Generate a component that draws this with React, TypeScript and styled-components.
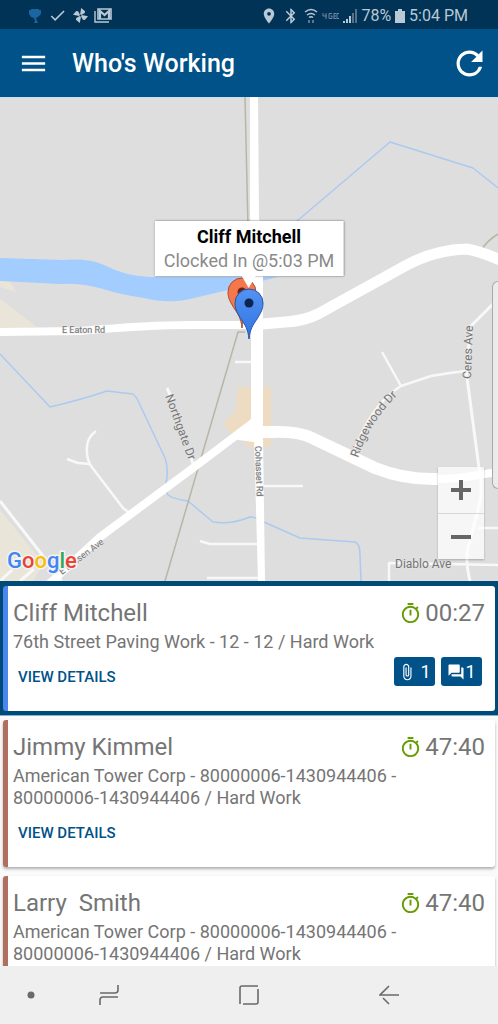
import React from "react";
import styled, { createGlobalStyle } from "styled-components";
import {
  MdAttachFile,
  MdBluetooth,
  MdCheck,
  MdMenu,
  MdOutlineTimer,
  MdPlace,
  MdQuestionAnswer,
  MdRefresh,
} from "react-icons/md";

const GlobalStyle = createGlobalStyle`
  * { box-sizing: border-box; }
  body { margin: 0; font-family: Roboto, "Liberation Sans", sans-serif; background: #efefef; }
  button { font: inherit; border: 0; padding: 0; background: none; color: inherit; cursor: pointer; }
  svg { display: block; }
`;

const Screen = styled.div`
  display: flex;
  flex-direction: column;
  height: 100vh;
  overflow: hidden;
`;

const StatusBar = styled.div`
  flex: none;
  display: flex;
  justify-content: space-between;
  align-items: center;
  height: 29px;
  padding: 2px 30px 0 28px;
  background: #003355;
  color: #b9c9d6;
  font-size: 16px;
  line-height: 20px;
`;

const StatusGroup = styled.div<{ $gap: number }>`
  display: flex;
  align-items: center;
  gap: ${(p) => p.$gap}px;
`;

const AppBar = styled.header`
  flex: none;
  display: flex;
  align-items: center;
  height: 68px;
  padding: 0 9px 0 18px;
  background: #005288;
  color: #fff;
`;

const AppTitle = styled.h1`
  flex: 1;
  margin: 0 0 0 23px;
  padding-top: 2px;
  font-size: 25px;
  line-height: 32px;
  font-weight: 500;
`;

const MapPanel = styled.main`
  position: relative;
  flex: 44 1 0;
  min-height: 0;
  background: #dedede;
  box-shadow: inset 0 1px #c4e2f2;
  overflow: hidden;
`;

const MapDrawing = styled.svg`
  width: 100%;
  height: 100%;
`;

const InfoWindow = styled.div`
  position: absolute;
  left: 50%;
  bottom: 63%;
  transform: translateX(-50%);
  padding: 4px 9px 3px;
  background: #fff;
  box-shadow: 0 0 2px rgba(0, 0, 0, 0.55);
  font-size: 18px;
  line-height: 24px;
  text-align: center;
  white-space: nowrap;
  color: #8a8a8a;
  &::after {
    content: "";
    position: absolute;
    top: 100%;
    left: 50%;
    margin-left: -7px;
    border: 7px solid transparent;
    border-top: 12px solid #fff;
    border-bottom: 0;
  }
`;

const InfoName = styled.strong`
  display: block;
  color: #000;
  font-weight: 700;
`;

const ZoomControl = styled.div`
  position: absolute;
  right: 14px;
  bottom: 22px;
  width: 46px;
  background: rgba(255, 255, 255, 0.72);
  box-shadow: 0 1px 2px rgba(0, 0, 0, 0.25);
`;

const ZoomButton = styled.button`
  display: flex;
  align-items: center;
  justify-content: center;
  width: 100%;
  height: 46px;
  & + & { border-top: 1px solid #d8d8d8; }
`;

const DrawerHandle = styled.div`
  position: absolute;
  right: 0;
  top: 38%;
  bottom: 19%;
  width: 6px;
  border: 1px solid #aaa;
  border-right: 0;
  border-radius: 6px 0 0 6px;
  background: #ebebeb;
`;

const WorkerList = styled.ul`
  flex: 35 1 0;
  min-height: 0;
  margin: 0;
  padding: 0;
  list-style: none;
  overflow-y: auto;
  scrollbar-width: none;
  background: #fafafa;
`;

const WorkerItem = styled.li<{ $selected: boolean }>`
  padding: 5px 3px 4px;
  background: ${(p) => (p.$selected ? "#004a78" : "transparent")};
  box-shadow: ${(p) => (p.$selected ? "0 1px #85b1d4" : "none")};
`;

const Card = styled.article<{ $accent: string; $raised: boolean }>`
  padding: 11px 10px 14px 5px;
  border-left: 5px solid ${(p) => p.$accent};
  border-radius: 3px;
  background: #fff;
  color: #757575;
  box-shadow: ${(p) => (p.$raised ? "0 2px 3px rgba(0, 0, 0, 0.3)" : "none")};
`;

const CardHeading = styled.div`
  display: flex;
  justify-content: space-between;
  align-items: center;
  font-size: 24px;
  line-height: 32px;
`;

const WorkerName = styled.h2`
  margin: 0;
  font: inherit;
  white-space: pre;
`;

const Elapsed = styled.span`
  display: flex;
  align-items: center;
  gap: 3px;
  svg { color: #669c00; }
`;

const Job = styled.p`
  margin: 2px 60px 0 0;
  font-size: 18px;
  line-height: 22px;
`;

const CardActions = styled.div`
  display: flex;
  justify-content: space-between;
  align-items: flex-start;
  margin-top: 4px;
  padding: 0 3px 0 5px;
`;

const DetailsButton = styled.button`
  font-size: 15px;
  font-weight: 500;
  line-height: 40px;
  color: #005288;
`;

const Badges = styled.div`
  display: flex;
  gap: 6px;
`;

const Badge = styled.button<{ $gap: number }>`
  display: flex;
  align-items: center;
  justify-content: center;
  gap: ${(p) => p.$gap}px;
  width: 41px;
  height: 29px;
  border-radius: 3px;
  background: #005288;
  color: #fff;
  font-size: 18px;
`;

const NavBar = styled.nav`
  flex: none;
  display: grid;
  grid-template-columns: 62px 1fr 2fr 1fr 62px;
  align-items: center;
  height: 58px;
  background: #efefef;
  color: #6a6a6a;
`;

const NavButton = styled.button`
  display: flex;
  align-items: center;
  justify-content: center;
  height: 58px;
`;

type Worker = {
  name: string;
  job: string;
  elapsed: string;
  accent: string;
  files?: number;
  notes?: number;
};

const workers: Worker[] = [
  { name: "Cliff Mitchell", job: "76th Street Paving Work - 12 - 12 / Hard Work", elapsed: "00:27", accent: "#4a86ee", files: 1, notes: 1 },
  { name: "Jimmy Kimmel", job: "American Tower Corp - 80000006-1430944406 - 80000006-1430944406 / Hard Work", elapsed: "47:40", accent: "#b07060" },
  { name: "Larry  Smith", job: "American Tower Corp - 80000006-1430944406 - 80000006-1430944406 / Hard Work", elapsed: "47:40", accent: "#b07060" },
];

function Trophy() {
  return (
    <svg width="14" height="16" viewBox="0 0 14 16" fill="#1b65a0">
      <path d="M3 1h8v1h2v4l-3 3-2 1 1 3 1 2H6l1-2-1-3-3-1-2-3V2h2z" />
    </svg>
  );
}

function Pinwheel() {
  const blade = "M11 10V0L18 4V7L13 11z";
  return (
    <svg width="15" height="15" viewBox="0 0 24 24" fill="currentColor">
      {[0, 90, 180, 270].map((angle) => (
        <path key={angle} d={blade} transform={`rotate(${angle + 10} 12 12)`} />
      ))}
    </svg>
  );
}

function MailStack() {
  return (
    <svg width="18" height="15" viewBox="0 0 18 15" fill="none" stroke="currentColor">
      <path d="M1 3v11h14" strokeWidth="1.4" />
      <path d="M4 1h13v10H4z" strokeWidth="1.6" />
      <path d="M6 11V3l4.500 4L15 3v8" strokeWidth="2.200" />
    </svg>
  );
}

function Wifi() {
  return (
    <svg width="14" height="16" viewBox="0 0 14 16" fill="none" stroke="currentColor" strokeWidth="1.500">
      <path d="M1 4q6-5 12 0M3 7q4-3 8 0M5 9.500q2-1.500 4 0" />
      <path d="M5 15v-3M9 12v3" stroke="#7891a5" />
    </svg>
  );
}

function Network() {
  return (
    <svg width="17" height="8" viewBox="0 0 17 8" fill="none" stroke="#6d889e">
      <path d="M1 1v3h4M4 1v6M10 1.500H7v5h3V4H8.500M12 1v6M12 1.500h2.500M12 6.500h2.500M12 4h2M17 1.500h-2v5h2" />
    </svg>
  );
}

function Signal() {
  return (
    <svg width="14" height="14" viewBox="0 0 14 14" fill="currentColor">
      <path d="M0 12h2v2H0zM3 10h2v4H3zM6 7h2v7H6z" />
      <path d="M9 4h2v10H9zM12 0h2v14h-2z" fill="#547188" />
    </svg>
  );
}

function Battery() {
  return (
    <svg width="10" height="14" viewBox="0 0 10 14" fill="currentColor">
      <path d="M3 0h4v2h3v12H0V2h3z" />
    </svg>
  );
}

function Pin({ x, y, fill, edge, dot }: { x: number; y: number; fill: string; edge: string; dot: string }) {
  return (
    <g transform={`translate(${x} ${y})`}>
      <path
        d="M0 0C-1-10-4-14-8-20C-11-25-14-29-14-36A14 14 0 0 1 14-36C14-29 11-25 8-20C4-14 1-10 0 0z"
        fill={fill}
        stroke={edge}
        strokeWidth="1"
      />
      <circle cy="-36" r="4.500" fill={dot} />
    </g>
  );
}

function StreetMap() {
  return (
    <MapDrawing viewBox="0 0 498 484" preserveAspectRatio="xMidYMid slice" role="img" aria-label="Map of worker locations">
      <defs>
        <linearGradient id="bluePin" x1="0" y1="0" x2="0" y2="1">
          <stop offset="0" stopColor="#5592f2" />
          <stop offset="1" stopColor="#2d74e0" />
        </linearGradient>
        <path id="ridgewood" d="M358 361Q370 324 400 296" />
      </defs>
      <rect y="1" width="498" height="483" fill="#dedede" />
      <g fill="#e9e5d8">
        <path d="M0 184h10l6 11-16-5zM0 202l37 28-37 2zM0 413l44 54-11 17H0z" />
      </g>
      <path d="M238 290h33v60h-25v-9h-13l-9-15 12-13z" fill="#eedcc2" />
      <path
        d="M0 161L63 163Q88 161 104 168Q125 179 150 180H278L262 184Q245 188 228 193L190 202Q170 207 144 201Q122 198 103 192Q82 186 60 187L0 184z"
        fill="#a3ccff"
      />
      <g fill="none" stroke="#abcaf0" strokeWidth="1.500" strokeLinejoin="round">
        <path d="M270 147L390 45L473 71L498 91" />
        <path d="M0 257L50 310Q80 303 107 294L133 297Q137 300 140 308L165 361Q168 369 167 381L165 390L168 398Q173 402 188 404L213 425Q230 428 250 420Q257 420 264 425L300 441L355 445Q360 447 360 458L361 484" />
      </g>
      <g fill="none" stroke="#b9b5a5" strokeWidth="1.500">
        <path d="M245 0L248 130M245 235H238L165 484M481 153Q488 143 498 137" />
      </g>
      <g fill="none" stroke="#f8f8f8" strokeWidth="3" strokeLinejoin="round">
        <path d="M96 334Q87 341 87 350Q86 361 91 369L123 411L131 417M67 362L78 366L90 367" strokeWidth="2.500" />
        <path d="M0 404L43 459M0 484L12 473M20 484L34 472M55 478L62 484" />
        <path d="M167 291L173 304M191 361L195 373" />
        <path d="M235 265H252M264 389H303M200 444L210 447H260M207 481H262" strokeWidth="2.500" />
        <path d="M382 255L401 289L431 279Q447 276 466 274M401 289Q370 308 353 357" strokeWidth="2.500" />
        <path d="M498 202L471 229L466 273L479 371Q483 390 480 405L468 451Q465 463 470 484" />
        <path d="M389 484V466L498 468M478 431H498" strokeWidth="2.500" />
      </g>
      <g fill="none" stroke="#fff" strokeLinejoin="round">
        <path d="M0 235L80 234Q150 228 190 228L257 228" strokeWidth="8" />
        <path d="M250 228L285 225Q304 224 318 217L405 169Q434 153 466 152Q480 154 500 163" strokeWidth="11" />
        <path d="M48 488L100 440L193 371L254 325" strokeWidth="8" />
        <path d="M235 341L259 316V344z" fill="#fff" strokeWidth="3" />
        <path d="M254 335H272Q298 334 312 341L375 371Q405 383 438 382" strokeWidth="12" />
        <path d="M436 382Q458 382 478 378L498 375" strokeWidth="8" />
      </g>
      <path d="M250 0h8l1 122 4 10V340l2 144h-7L254 340l-3-15V132l-1-12z" fill="#fff" />
      <g fill="#757575" stroke="#e6e6e6" strokeWidth="1" paintOrder="stroke" fontFamily="Roboto, sans-serif" fontSize="12">
        <text x="62" y="236" fontSize="9">E Eaton Rd</text>
        <text transform="translate(165 299) rotate(70)">Northgate Dr</text>
        <text><textPath href="#ridgewood">Ridgewood Dr</textPath></text>
        <text transform="translate(471 282) rotate(-88)">Ceres Ave</text>
        <text transform="translate(255 349) rotate(88)" fontSize="9">Cohasset Rd</text>
        <text x="395" y="471">Diablo Ave</text>
        <text transform="translate(62 478) rotate(-37)" fontSize="9">E Lassen Ave</text>
      </g>
      <g fontFamily="Roboto, sans-serif" fontSize="22" fontWeight="500" stroke="#f3f3f3" strokeWidth="3" paintOrder="stroke">
        <text x="7" y="471">
          <tspan fill="#4285f4">G</tspan>
          <tspan fill="#ea4335">o</tspan>
          <tspan fill="#fbbc05">o</tspan>
          <tspan fill="#4285f4">g</tspan>
          <tspan fill="#34a853">l</tspan>
          <tspan fill="#ea4335">e</tspan>
        </text>
      </g>
      <Pin x={242} y={231} fill="#f5774b" edge="#a94d2d" dot="#6b2413" />
      <Pin x={249} y={242} fill="url(#bluePin)" edge="#2456a8" dot="#0b2550" />
    </MapDrawing>
  );
}

function WorkerCard({ worker, selected }: { worker: Worker; selected: boolean }) {
  return (
    <WorkerItem $selected={selected}>
      <Card $accent={worker.accent} $raised={!selected}>
        <CardHeading>
          <WorkerName>{worker.name}</WorkerName>
          <Elapsed>
            <MdOutlineTimer size={23} />
            {worker.elapsed}
          </Elapsed>
        </CardHeading>
        <Job>{worker.job}</Job>
        <CardActions>
          <DetailsButton type="button">VIEW DETAILS</DetailsButton>
          <Badges>
            {worker.files && (
              <Badge type="button" aria-label="Attachments" $gap={4}>
                <MdAttachFile size={18} />
                {worker.files}
              </Badge>
            )}
            {worker.notes && (
              <Badge type="button" aria-label="Messages" $gap={0}>
                <MdQuestionAnswer size={18} />
                {worker.notes}
              </Badge>
            )}
          </Badges>
        </CardActions>
      </Card>
    </WorkerItem>
  );
}

export default function App() {
  return (
    <Screen>
      <GlobalStyle />
      <StatusBar>
        <StatusGroup $gap={6}>
          <Trophy />
          <MdCheck size={19} />
          <Pinwheel />
          <MailStack />
        </StatusGroup>
        <StatusGroup $gap={4}>
          <MdPlace size={18} />
          <MdBluetooth size={18} />
          <Wifi />
          <Network />
          <Signal />
          <span>78%</span>
          <Battery />
          <span>5:04 PM</span>
        </StatusGroup>
      </StatusBar>
      <AppBar>
        <button type="button" aria-label="Menu">
          <MdMenu size={31} />
        </button>
        <AppTitle>Who's Working</AppTitle>
        <button type="button" aria-label="Refresh">
          <MdRefresh size={39} />
        </button>
      </AppBar>
      <MapPanel>
        <StreetMap />
        <InfoWindow>
          <InfoName>Cliff Mitchell</InfoName>
          Clocked In @5:03 PM
        </InfoWindow>
        <DrawerHandle />
        <ZoomControl>
          <ZoomButton type="button" aria-label="Zoom in">
            <svg width="20" height="20" viewBox="0 0 20 20" stroke="#666" strokeWidth="4">
              <path d="M0 10h20M10 0v20" />
            </svg>
          </ZoomButton>
          <ZoomButton type="button" aria-label="Zoom out">
            <svg width="20" height="20" viewBox="0 0 20 20" stroke="#666" strokeWidth="4">
              <path d="M0 10h20" />
            </svg>
          </ZoomButton>
        </ZoomControl>
      </MapPanel>
      <WorkerList>
        {workers.map((worker, index) => (
          <WorkerCard key={worker.name} worker={worker} selected={index === 0} />
        ))}
      </WorkerList>
      <NavBar>
        <NavButton type="button" aria-label="Toggle navigation bar">
          <svg width="8" height="8" viewBox="0 0 8 8" fill="currentColor">
            <circle cx="4" cy="4" r="3.500" />
          </svg>
        </NavButton>
        <NavButton type="button" aria-label="Recent apps">
          <svg width="20" height="22" viewBox="0 0 20 22" fill="none" stroke="currentColor" strokeWidth="1.600">
            <path d="M1 9h15q3 0 3-3V1M1 21v-5q0-3 3-3h15" />
          </svg>
        </NavButton>
        <NavButton type="button" aria-label="Home">
          <svg width="20" height="20" viewBox="0 0 20 20" fill="none" stroke="currentColor" strokeWidth="1.600">
            <path d="M1 19V3q0-2 2-2h16M19 4v13q0 2-2 2H4" />
          </svg>
        </NavButton>
        <NavButton type="button" aria-label="Back">
          <svg width="20" height="20" viewBox="0 0 20 20" fill="none" stroke="currentColor" strokeWidth="1.600">
            <path d="M10 1L1 10H20M4 13L10 19" />
          </svg>
        </NavButton>
      </NavBar>
    </Screen>
  );
}
